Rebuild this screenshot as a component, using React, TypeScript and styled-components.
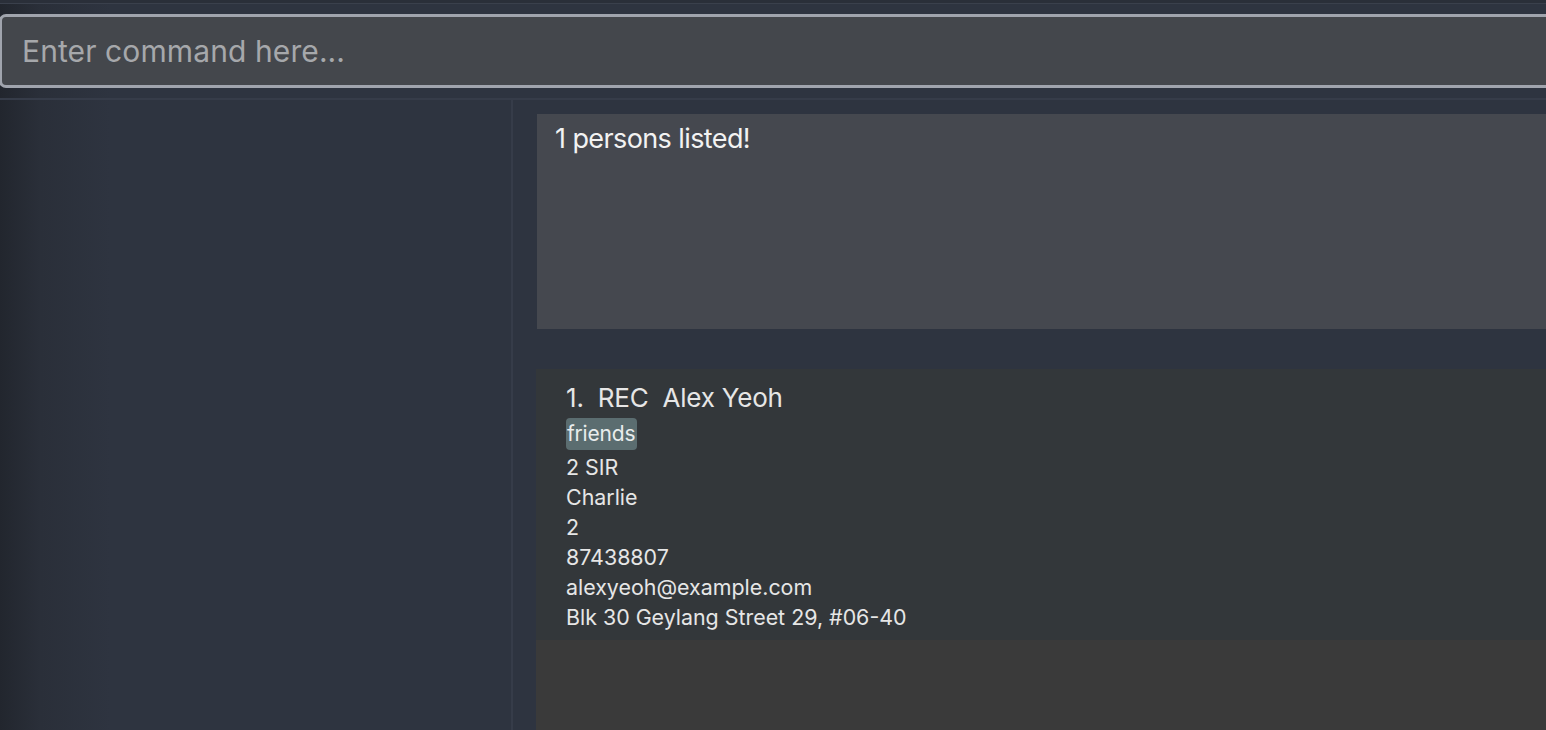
import React from "react";
import styled, { createGlobalStyle } from "styled-components";

const GlobalStyle = createGlobalStyle`
  html, body { margin: 0; padding: 0; overflow: hidden; }
  body { font-family: Inter, "Noto Sans", sans-serif; background: #2e3440; }
`;

const Window = styled.div`
  width: 1546px;
  height: 730px;
  display: flex;
  flex-direction: column;
  overflow: hidden;
  background: linear-gradient(90deg, #22262e 0px, #2a2f39 40px, #2e3440 110px, #2e3440 100%);
`;

const TopStrip = styled.div`
  height: 3px;
  background: #2a2f39;
  border-bottom: 1px solid #3a404c;
  flex: none;
`;

const CommandArea = styled.div`
  padding: 10px 0 10px 0;
  flex: none;
`;

const CommandInput = styled.input`
  box-sizing: border-box;
  width: calc(100% + 12px);
  height: 74px;
  margin: 0 0 0 -1px;
  background: #44474c;
  border: 3px solid #a0a4ad;
  border-radius: 7px;
  padding: 0 0 0 20px;
  font-family: Inter, "Noto Sans", sans-serif;
  font-size: 30px;
  letter-spacing: 0.1px;
  color: #e8e8e8;
  outline: none;
  &::placeholder { color: #a6a8ab; }
`;

const Main = styled.div`
  flex: 1;
  display: flex;
  border-top: 2px solid #363c49;
  min-height: 0;
`;

const SidePanel = styled.div`
  width: 511px;
  flex: none;
  border-right: 2px solid #363c49;
`;

const ContentPanel = styled.div`
  flex: 1;
  display: flex;
  flex-direction: column;
  padding: 14px 0 0 24px;
  min-width: 0;
`;

const ResultBox = styled.div`
  height: 215px;
  flex: none;
  background: #45484f;
  padding: 8px 0 0 18px;
  box-sizing: border-box;
  color: #f2f2f2;
  font-size: 27px;
  letter-spacing: -0.6px;
`;

const PersonList = styled.div`
  margin-top: 40px;
  margin-left: -1px;
  flex: 1;
  background: #3a3a3a;
`;

const Card = styled.div`
  background: #33373a;
  padding: 13px 0 8px 30px;
  display: flex;
  flex-direction: column;
  color: #e6e6e6;
`;

const Header = styled.div`
  font-size: 26px;
  line-height: 32px;
  letter-spacing: -0.2px;
  display: flex;
  gap: 14px;
`;

const Tags = styled.div`
  display: flex;
  margin-top: 4px;
  margin-bottom: 2px;
`;

const Tag = styled.span`
  background: #5b6d70;
  color: #e8ecec;
  border-radius: 4px;
  font-size: 21px;
  line-height: 32px;
  padding: 0 2px 0 1px;
  letter-spacing: -0.2px;
`;

const Field = styled.div`
  font-size: 21.4px;
  line-height: 30px;
  letter-spacing: 0;
`;

export default function App() {
  return (
    <>
      <GlobalStyle />
      <Window>
        <TopStrip />
        <CommandArea>
          <CommandInput placeholder="Enter command here..." />
        </CommandArea>
        <Main>
          <SidePanel />
          <ContentPanel>
            <ResultBox>1 persons listed!</ResultBox>
            <PersonList>
              <Card>
                <Header>
                  <span>1.</span>
                  <span>REC</span>
                  <span>Alex Yeoh</span>
                </Header>
                <Tags>
                  <Tag>friends</Tag>
                </Tags>
                <Field>2 SIR</Field>
                <Field>Charlie</Field>
                <Field>2</Field>
                <Field>87438807</Field>
                <Field>alexyeoh@example.com</Field>
                <Field>Blk 30 Geylang Street 29, #06-40</Field>
              </Card>
            </PersonList>
          </ContentPanel>
        </Main>
      </Window>
    </>
  );
}
